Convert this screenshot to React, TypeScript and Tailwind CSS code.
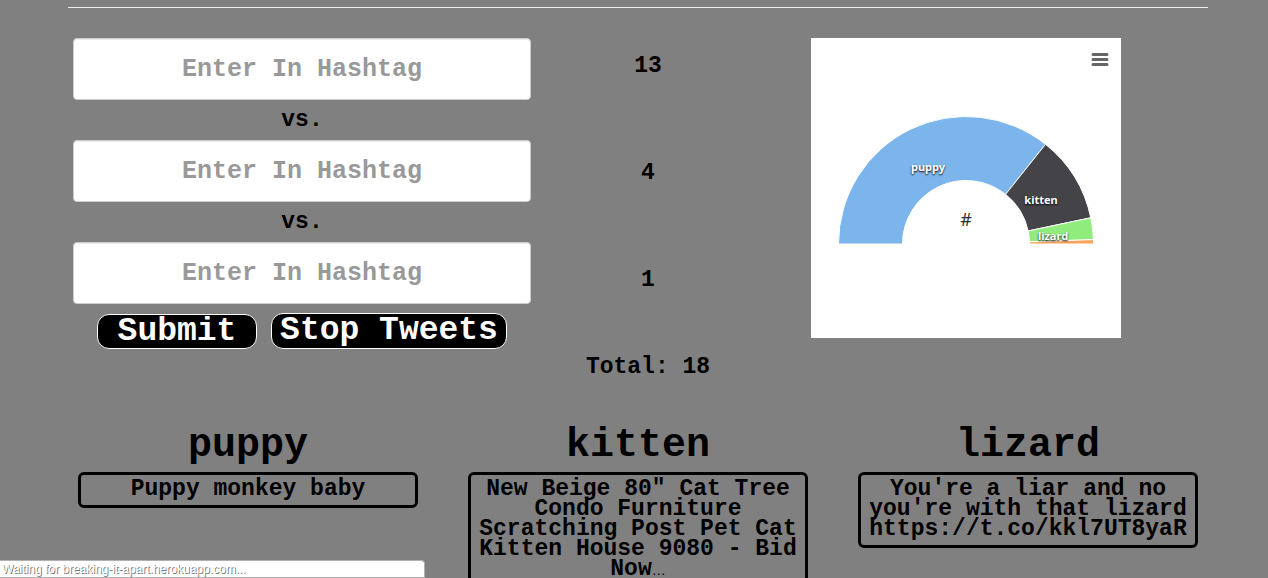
import React from "react";

const CX = 155;
const CY = 206;
const OUTER = 127.5;
const INNER = 63.5;

const slices = [
  { name: "puppy", share: 13, color: "#7cb5ec", x: 117, y: 133 },
  { name: "kitten", share: 4, color: "#434348", x: 230, y: 166 },
  { name: "lizard", share: 1, color: "#90ed7d", x: 242, y: 202 },
  { name: "", share: 0.2, color: "#f7a35c", x: 0, y: 0 },
];

const total = slices.reduce((sum, s) => sum + s.share, 0);

function point(radius: number, fraction: number) {
  const a = Math.PI * (1 - fraction);
  return `${CX + radius * Math.cos(a)} ${CY - radius * Math.sin(a)}`;
}

function slicePath(from: number, to: number) {
  return `M${point(OUTER, from)}A${OUTER} ${OUTER} 0 0 1 ${point(OUTER, to)}L${point(INNER, to)}A${INNER} ${INNER} 0 0 0 ${point(INNER, from)}Z`;
}

function Chart() {
  let start = 0;
  const paths = slices.map((s) => {
    const from = start;
    start += s.share / total;
    return <path key={s.color} d={slicePath(from, start)} fill={s.color} stroke="#fff" strokeWidth="1" />;
  });
  return (
    <svg width="310" height="300" viewBox="0 0 310 300" role="img" aria-label="Tweets by hashtag" className="bg-white font-['Noto_Sans',sans-serif]">
      {paths}
      <g className="fill-white text-[11px] font-bold [text-shadow:0_1px_2px_#000]" textAnchor="middle">
        {slices.filter((s) => s.name).map((s) => (
          <text key={s.name} x={s.x} y={s.y}>{s.name}</text>
        ))}
      </g>
      <text x="155" y="188" textAnchor="middle" className="fill-[#333333] text-lg font-normal">#</text>
      <path d="M282 16.500H296M282 21.500H296M282 26.500H296" stroke="#666" strokeWidth="3" strokeLinecap="round" />
    </svg>
  );
}

function HashtagInput({ id }: { id: string }) {
  return (
    <input
      id={id}
      aria-label="Hashtag"
      placeholder="Enter In Hashtag"
      className="block h-[62px] w-full rounded border border-[#cccccc] bg-white text-center text-[25px] font-bold shadow-[inset_0_1px_1px_rgba(0,0,0,0.075)] placeholder:text-[#999999]"
    />
  );
}

function Versus() {
  return <p className="h-10 text-center leading-10">vs.</p>;
}

function TweetColumn({ title, children }: { title: string; children: React.ReactNode }) {
  return (
    <section>
      <h2 className="text-center text-[40px] leading-[44px]">{title}</h2>
      <p className="mt-1 rounded-md border-3 border-black px-[5px] pt-1 pb-1.5 text-center wrap-break-word">{children}</p>
    </section>
  );
}

export default function App() {
  return (
    <div className="min-h-screen bg-[#808080] pt-[7px] pr-[60px] pl-[68px] font-['Liberation_Mono',monospace] text-[23px] leading-5 font-bold text-black">
      <hr className="border-[#eeeeee]" />
      <main>
        <div className="grid grid-cols-[458fr_234fr_402fr] pt-[30px] pr-[41px] pl-[5px]">
          <form onSubmit={(e) => e.preventDefault()}>
            <HashtagInput id="tag-1" />
            <Versus />
            <HashtagInput id="tag-2" />
            <Versus />
            <HashtagInput id="tag-3" />
            <div className="mt-[9px] flex items-end justify-center gap-3.5 text-[33px] leading-[30px] text-white">
              <button type="submit" className="h-[35px] w-40 rounded-xl border border-white bg-black">Submit</button>
              <button type="button" className="h-9 w-59 rounded-xl border border-white bg-black whitespace-nowrap">Stop Tweets</button>
            </div>
          </form>
          <div className="flex flex-col gap-[87px] pt-[18px] text-center">
            <p>13</p>
            <p>4</p>
            <p>1</p>
            <p className="-mt-5">Total: 18</p>
          </div>
          <div className="flex justify-center">
            <Chart />
          </div>
        </div>
        <div className="grid grid-cols-3 items-start gap-[50px] px-2.5 pt-[47px]">
          <TweetColumn title="puppy">Puppy monkey baby</TweetColumn>
          <TweetColumn title="kitten">
            New Beige 80" Cat Tree Condo Furniture Scratching Post Pet Cat Kitten House 9080 - Bid Now
            <span className="font-['Liberation_Sans',sans-serif] text-sm leading-none font-normal">…</span>
          </TweetColumn>
          <TweetColumn title="lizard">You're a liar and no you're with that lizard https://t.co/kkl7UT8yaR</TweetColumn>
        </div>
      </main>
      <div role="status" className="fixed bottom-0 left-0 h-[18px] w-[425px] rounded-tr border-t border-r border-b border-[#b0b0b0] bg-white pl-0.5 font-['Liberation_Sans',sans-serif] text-xs leading-4 font-normal text-white [text-shadow:1px_1px_0_#777]">
        Waiting for breaking-it-apart.herokuapp.com...
      </div>
    </div>
  );
}
